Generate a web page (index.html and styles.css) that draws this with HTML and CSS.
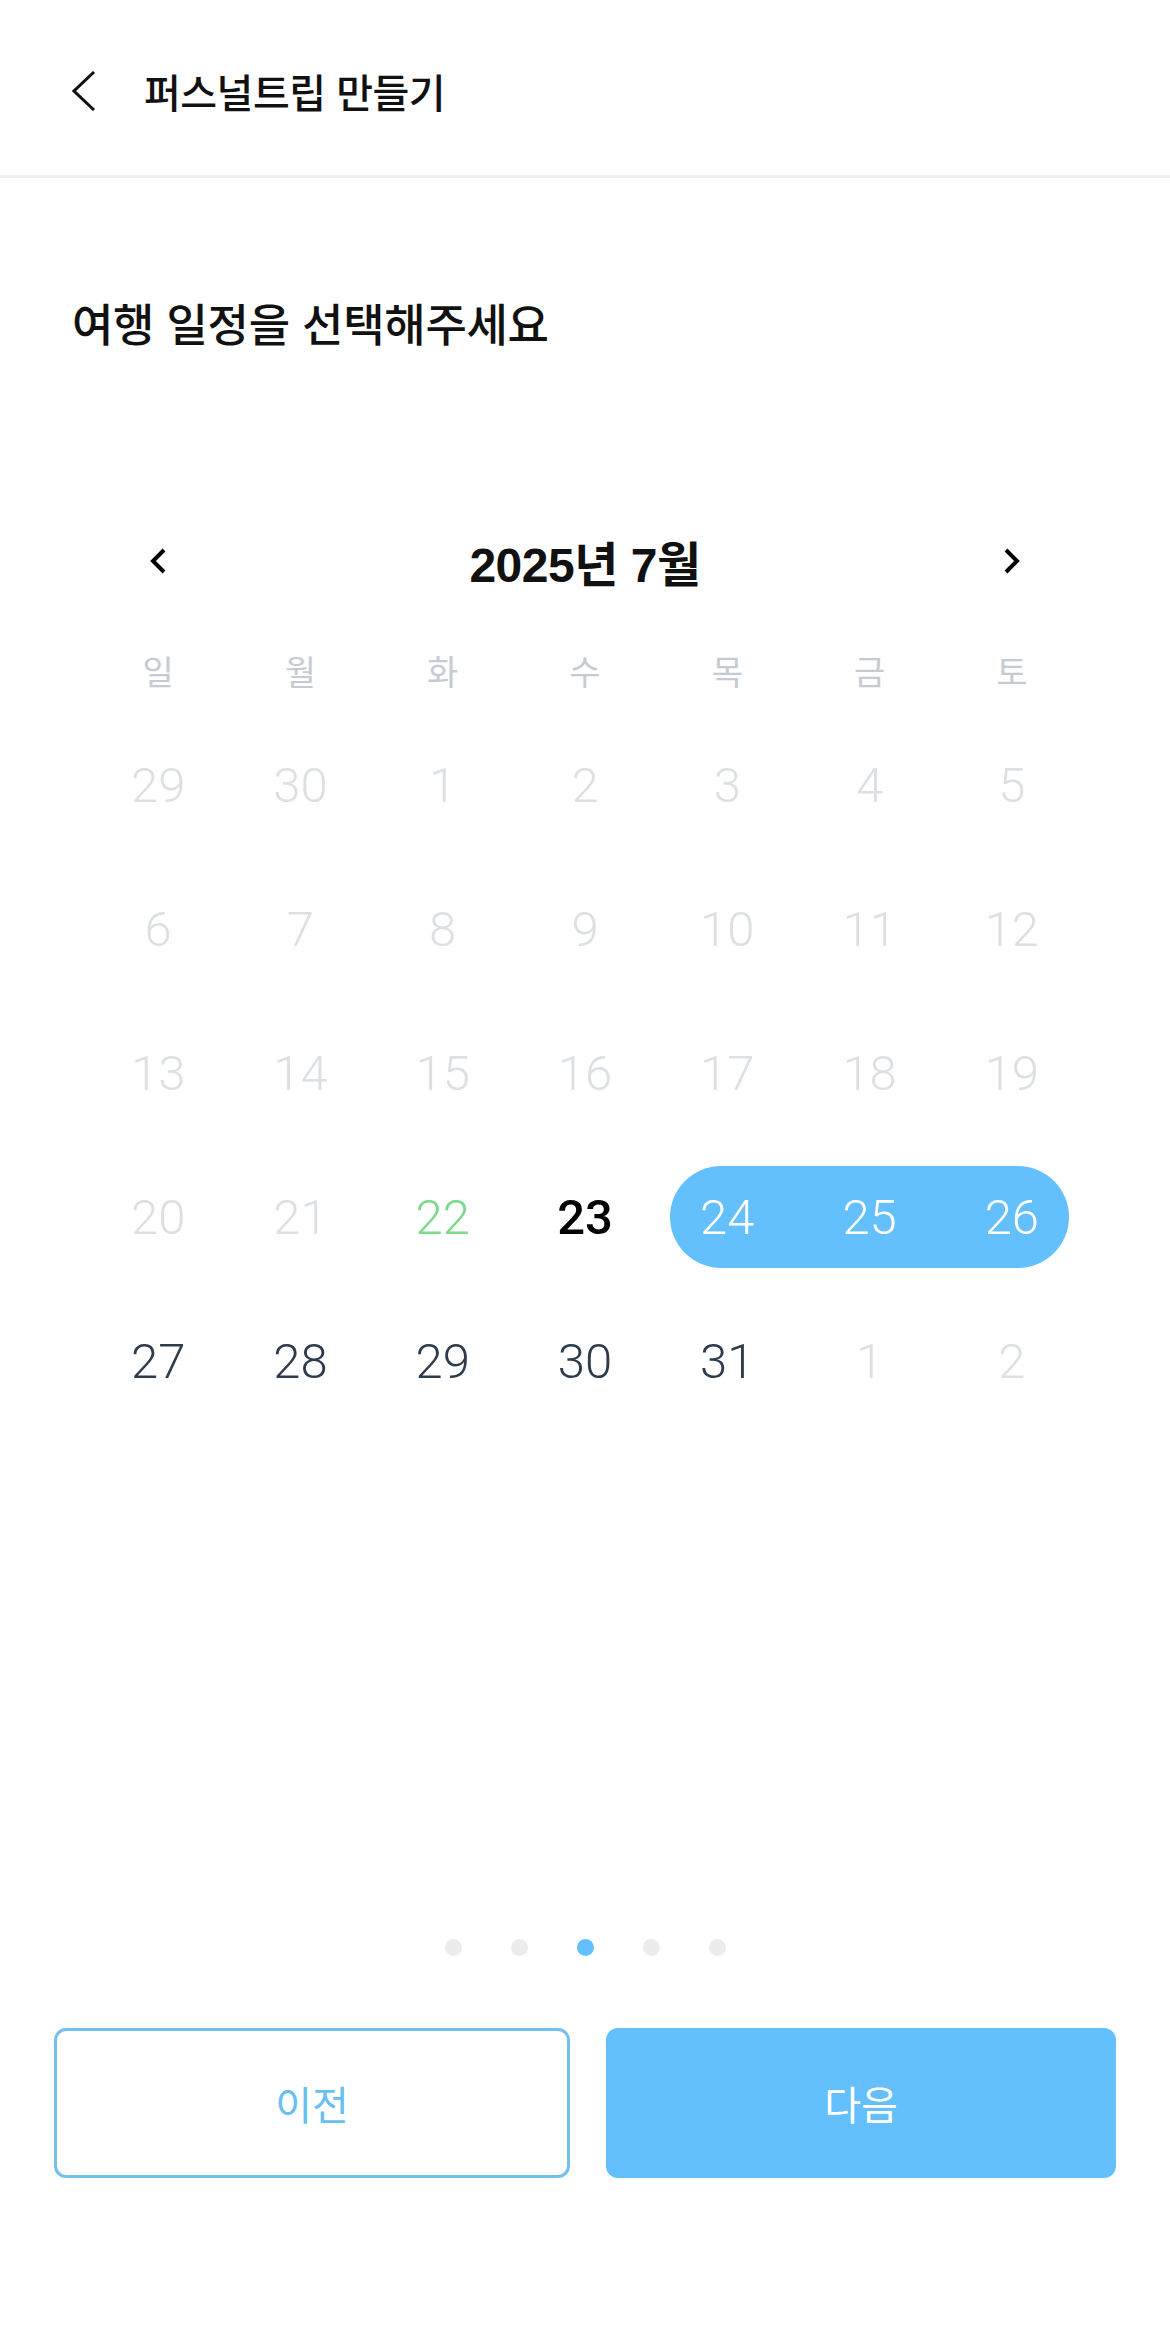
FILE: index.html
```html
<!DOCTYPE html>
<html lang="ko">
<head>
    <meta charset="UTF-8">
    <meta name="viewport" content="width=device-width, initial-scale=1.0">
    <title>퍼스널트립 만들기</title>

    <link rel="stylesheet" href="styles.css">
</head>
<body>

    <!-- 상단 헤더 -->
    <header class="top-bar">
        <button class="back-btn" aria-label="뒤로">
            <svg width="24" height="40" viewBox="0 0 24 40">
                <polyline points="22,1 2,20 22,39" fill="none" stroke="#111" stroke-width="3" stroke-linejoin="miter"/>
            </svg>
        </button>
        <h1 class="top-title">퍼스널트립 만들기</h1>
    </header>

    <main class="content">
        <h2 class="step-title">여행 일정을 선택해주세요</h2>

        <!-- 달력 -->
        <section class="calendar">
            <div class="cal-nav">
                <button class="cal-arrow" aria-label="이전 달">
                    <svg width="18" height="26" viewBox="0 0 18 26">
                        <polyline points="15,2 4,13 15,24" fill="none" stroke="#000" stroke-width="4"/>
                    </svg>
                </button>
                <div class="cal-month">2025년 7월</div>
                <button class="cal-arrow" aria-label="다음 달">
                    <svg width="18" height="26" viewBox="0 0 18 26">
                        <polyline points="3,2 14,13 3,24" fill="none" stroke="#000" stroke-width="4"/>
                    </svg>
                </button>
            </div>

            <div class="cal-week">
                <span>일</span><span>월</span><span>화</span><span>수</span><span>목</span><span>금</span><span>토</span>
            </div>

            <div class="cal-days">
                <div class="day muted"><span class="num">29</span></div>
                <div class="day muted"><span class="num">30</span></div>
                <div class="day muted"><span class="num">1</span></div>
                <div class="day muted"><span class="num">2</span></div>
                <div class="day muted"><span class="num">3</span></div>
                <div class="day muted"><span class="num">4</span></div>
                <div class="day muted"><span class="num">5</span></div>

                <div class="day muted"><span class="num">6</span></div>
                <div class="day muted"><span class="num">7</span></div>
                <div class="day muted"><span class="num">8</span></div>
                <div class="day muted"><span class="num">9</span></div>
                <div class="day muted"><span class="num">10</span></div>
                <div class="day muted"><span class="num">11</span></div>
                <div class="day muted"><span class="num">12</span></div>

                <div class="day muted"><span class="num">13</span></div>
                <div class="day muted"><span class="num">14</span></div>
                <div class="day muted"><span class="num">15</span></div>
                <div class="day muted"><span class="num">16</span></div>
                <div class="day muted"><span class="num">17</span></div>
                <div class="day muted"><span class="num">18</span></div>
                <div class="day muted"><span class="num">19</span></div>

                <div class="day muted"><span class="num">20</span></div>
                <div class="day muted"><span class="num">21</span></div>
                <div class="day holiday"><span class="num">22</span></div>
                <div class="day today"><span class="num">23</span></div>
                <div class="day range start"><span class="num">24</span></div>
                <div class="day range"><span class="num">25</span></div>
                <div class="day range end"><span class="num">26</span></div>

                <div class="day"><span class="num">27</span></div>
                <div class="day"><span class="num">28</span></div>
                <div class="day"><span class="num">29</span></div>
                <div class="day"><span class="num">30</span></div>
                <div class="day"><span class="num">31</span></div>
                <div class="day muted"><span class="num">1</span></div>
                <div class="day muted"><span class="num">2</span></div>
            </div>
        </section>
    </main>

    <!-- 단계 표시 + 버튼 -->
    <footer class="bottom">
        <div class="steps">
            <span class="dot"></span>
            <span class="dot"></span>
            <span class="dot active"></span>
            <span class="dot"></span>
            <span class="dot"></span>
        </div>
        <div class="actions">
            <button class="btn btn-outline">이전</button>
            <button class="btn btn-fill">다음</button>
        </div>
    </footer>

</body>
</html>
```

FILE: styles.css
```css
/* 기본 */
body {
    margin: 0;
    background: #fff;
    font-family: "Noto Sans CJK KR", "Noto Sans", sans-serif;
    color: #111;
}

button {
    font-family: inherit;
    background: none;
    border: none;
    padding: 0;
    cursor: pointer;
}

/* 헤더 */
.top-bar {
    display: flex;
    align-items: center;
    height: 178px;
    padding: 6px 0 0 72px;
    box-sizing: border-box;
    border-bottom: 3px solid #eeeeee;
}

.back-btn {
    display: flex;
    width: 24px;
}

.top-title {
    margin: 0 0 0 48px;
    font-size: 40px;
    font-weight: 500;
    letter-spacing: -0.5px;
}

/* 본문 */
.content {
    padding: 0 72px;
}

.step-title {
    margin: 117px 0 0;
    font-size: 45px;
    line-height: 56px;
    font-weight: 500;
    letter-spacing: -0.3px;
}

/* 달력 */
.calendar {
    width: 996px;
    margin: 180px auto 0;
}

.cal-nav {
    display: flex;
    align-items: center;
    height: 60px;
}

.cal-arrow {
    display: flex;
    justify-content: center;
    width: 142px;
}

.cal-month {
    flex: 1;
    text-align: center;
    font-family: "Liberation Sans", "Noto Sans CJK KR", sans-serif;
    font-size: 48px;
    font-weight: 700;
    letter-spacing: -0.5px;
}

.cal-week {
    display: grid;
    grid-template-columns: repeat(7, 1fr);
    height: 86px;
    margin-top: 36px;
    align-items: center;
    text-align: center;
    font-size: 34px;
    color: #c6cbd3;
}

.cal-days {
    display: grid;
    grid-template-columns: repeat(7, 1fr);
    grid-auto-rows: 144px;
}

.day {
    display: flex;
    align-items: center;
}

.day .num {
    flex: 1;
    display: flex;
    align-items: center;
    justify-content: center;
    height: 102px;
    font-family: Roboto, "Liberation Sans", sans-serif;
    font-size: 49px;
    font-weight: 300;
    color: #2d3b4a;
}

.day.muted .num {
    color: #dcdfe4;
}

.day.holiday .num {
    color: #7ed88a;
}

.day.today .num {
    color: #000;
    font-weight: 500;
}

/* 선택 구간 */
.day.range .num {
    background: #64bffd;
    color: #fff;
}

.day.start .num {
    margin-left: 14px;
    padding-right: 14px;
    border-radius: 51px 0 0 51px;
}

.day.end .num {
    margin-right: 14px;
    padding-left: 14px;
    border-radius: 0 51px 51px 0;
}

/* 하단 */
.bottom {
    margin-top: 506px;
}

.steps {
    display: flex;
    justify-content: center;
    gap: 49px;
}

.dot {
    width: 17px;
    height: 17px;
    border-radius: 50%;
    background: #ececec;
}

.dot.active {
    background: #64bffd;
}

.actions {
    display: flex;
    gap: 36px;
    padding: 0 54px;
    margin-top: 72px;
}

.btn {
    flex: 1;
    height: 150px;
    border-radius: 12px;
    font-size: 40px;
    box-sizing: border-box;
}

.btn-outline {
    border: 3px solid #74c0ea;
    color: #68bff2;
}

.btn-fill {
    background: #64bffd;
    color: #fff;
}
```
